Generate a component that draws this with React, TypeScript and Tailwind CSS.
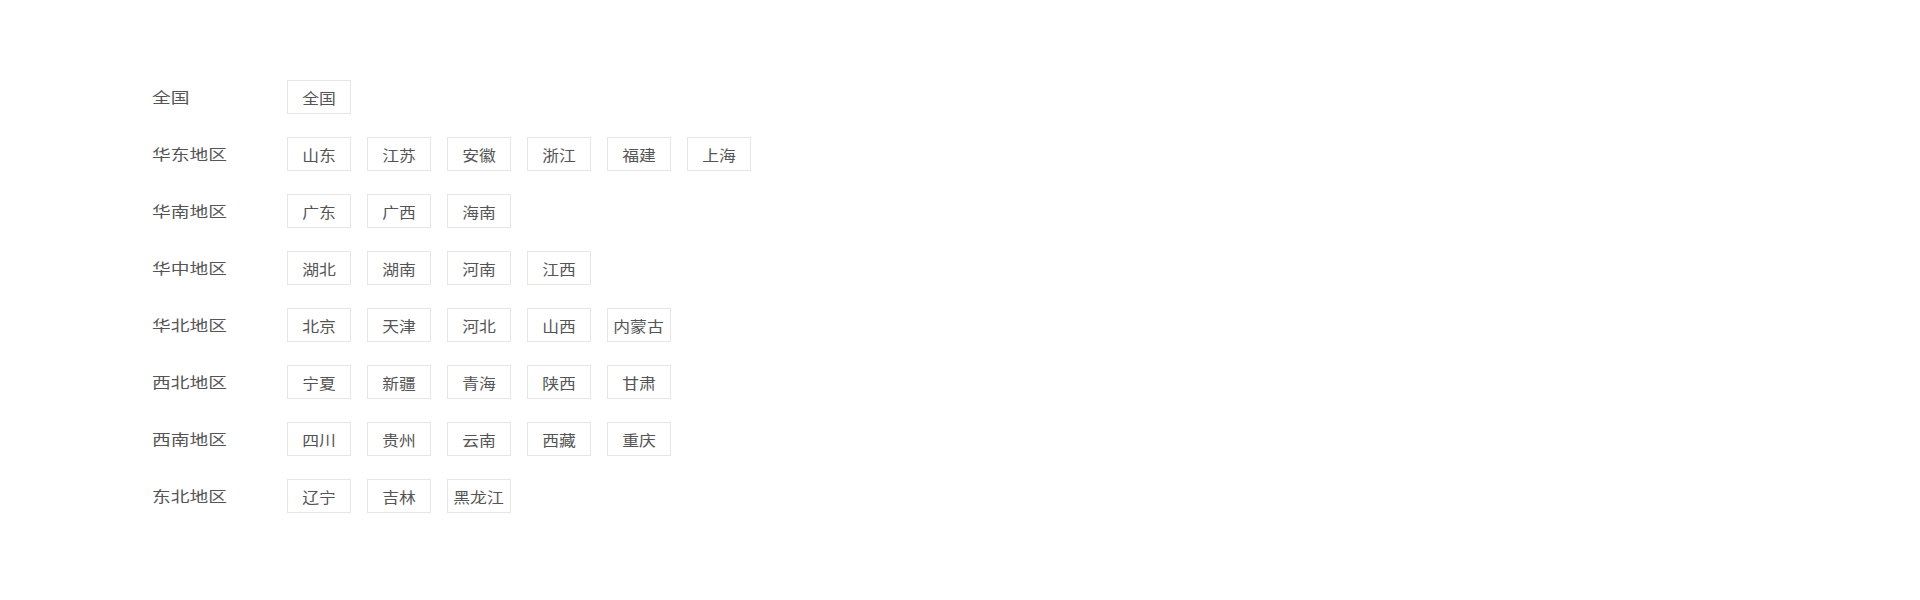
import React from "react";

const rows: { label: string; items: string[] }[] = [
  { label: "全国", items: ["全国"] },
  { label: "华东地区", items: ["山东", "江苏", "安徽", "浙江", "福建", "上海"] },
  { label: "华南地区", items: ["广东", "广西", "海南"] },
  { label: "华中地区", items: ["湖北", "湖南", "河南", "江西"] },
  { label: "华北地区", items: ["北京", "天津", "河北", "山西", "内蒙古"] },
  { label: "西北地区", items: ["宁夏", "新疆", "青海", "陕西", "甘肃"] },
  { label: "西南地区", items: ["四川", "贵州", "云南", "西藏", "重庆"] },
  { label: "东北地区", items: ["辽宁", "吉林", "黑龙江"] },
];

export default function App() {
  return (
    <div
      className="w-[1920px] h-[600px] bg-white pt-[80px] pl-[152px]"
      style={{ fontFamily: '"Noto Sans CJK SC", "Noto Sans", sans-serif' }}
    >
      {rows.map((r) => (
        <div key={r.label} className="flex items-center h-[34px] mb-[23px]">
          <div className="w-[135px] -mt-[3px]">
            <span className="inline-block origin-left scale-x-[1.25] text-[15px] text-[#555555] leading-none">
              {r.label}
            </span>
          </div>
          <div className="flex gap-[16px]">
            {r.items.map((it) => (
              <div
                key={it}
                className="w-[64px] h-[34px] border border-[#e6e6e6] flex items-center justify-center whitespace-nowrap"
              >
                <span className="inline-block scale-x-[1.12] text-[15px] text-[#555555] leading-none">
                  {it}
                </span>
              </div>
            ))}
          </div>
        </div>
      ))}
    </div>
  );
}
